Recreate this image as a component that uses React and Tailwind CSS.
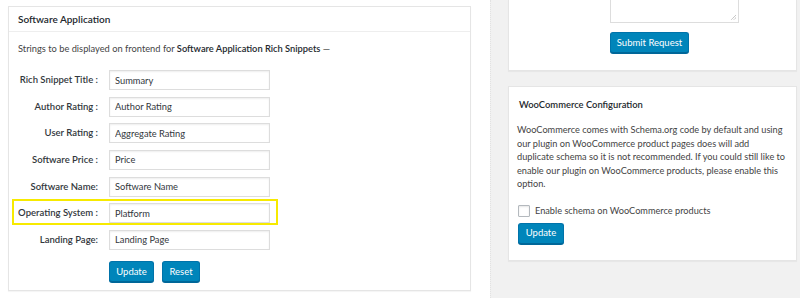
import React from 'react';

const FIELDS = [
  { label: 'Rich Snippet Title :', value: 'Summary' },
  { label: 'Author Rating :', value: 'Author Rating' },
  { label: 'User Rating :', value: 'Aggregate Rating' },
  { label: 'Software Price :', value: 'Price' },
  { label: 'Software Name:', value: 'Software Name' },
  { label: 'Operating System :', value: 'Platform', highlight: true },
  { label: 'Landing Page:', value: 'Landing Page' },
];

const btn = 'h-[21px] px-[5px] rounded-[3px] bg-[#0085ba] border border-[#0073aa] border-b-[#006799] shadow-[0_1px_0_#006799] text-white text-[9.5px] leading-none whitespace-nowrap flex items-center justify-center';

function FieldRow({ label, value, highlight }) {
  return (
    <div className="relative flex items-center h-[20px]">
      {highlight && (
        <span className="absolute left-[-6px] top-[-4px] w-[266px] h-[26px] border-2 border-[#f7ea00] pointer-events-none" />
      )}
      <label className="w-[81px] pr-[1px] text-right text-[9.5px] font-semibold text-[#32373c] whitespace-nowrap">{label}</label>
      <input
        type="text"
        defaultValue={value}
        className="ml-[10px] w-[161px] h-[20px] border border-[#dddddd] bg-white px-[5px] text-[9.3px] text-[#32373c] shadow-[inset_0_1px_2px_rgba(0,0,0,0.07)] outline-none"
      />
    </div>
  );
}

export default function App() {
  return (
    <div className="w-[800px] h-[298px] flex bg-white overflow-hidden" style={{ fontFamily: 'Lato, "Open Sans", sans-serif' }}>
      {/* left column */}
      <div className="w-[490px] shrink-0 pl-[8px] pt-[6px]">
        <div className="w-[463px] h-[285px] border border-[#e5e5e5] bg-white shadow-[0_1px_1px_rgba(0,0,0,0.04)]">
          <div className="h-[25px] border-b border-[#eeeeee] px-[9px] flex items-center">
            <h2 className="text-[10px] font-semibold text-[#23282d]">Software Application</h2>
          </div>
          <div className="px-[9px] pt-[10px]">
            <p className="text-[9.3px] text-[#444] h-[14px] leading-[14px] whitespace-nowrap">
              Strings to be displayed on frontend for <span className="font-semibold text-[#23282d]">Software Application Rich Snippets</span> —
            </p>
            <div className="mt-[14px] flex flex-col gap-[6.67px]">
              {FIELDS.map(f => <FieldRow key={f.label} {...f} />)}
            </div>
            <div className="mt-[11px] ml-[91px] flex gap-[8px]">
              <button className={btn + ' w-[45px]'}>Update</button>
              <button className={btn + ' w-[38px]'}>Reset</button>
            </div>
          </div>
        </div>
      </div>

      {/* right column */}
      <div className="flex-1 bg-[#f1f1f1] border-l border-dotted border-[#e2e2e2] pl-[17px] pr-[3px]">
        <div className="h-[71px] bg-white border border-t-0 border-[#e5e5e5] shadow-[0_1px_1px_rgba(0,0,0,0.04)] overflow-hidden">
          <div className="relative ml-[101px] mt-[-30px] w-[129px] h-[53px] border border-[#dddddd] bg-white">
            <svg className="absolute right-[1px] bottom-[1px]" width="7" height="7" viewBox="0 0 7 7">
              <path d="M6 1 L1 6 M6 3.5 L3.5 6" stroke="#9a9a9a" strokeWidth="0.8" strokeDasharray="1 0.6" />
            </svg>
          </div>
          <button className={btn + ' mt-[9px] ml-[101px] w-[79px]'}>Submit Request</button>
        </div>

        <div className="mt-[15px] h-[175px] bg-white border border-[#e5e5e5] shadow-[0_1px_1px_rgba(0,0,0,0.04)] px-[8px] pt-[11px]">
          <h3 className="pl-[2px] h-[14px] leading-[14px] text-[9.4px] font-semibold text-[#23282d]">WooCommerce Configuration</h3>
          <p className="mt-[11px] text-[9.2px] leading-[13.5px] text-[#444] whitespace-nowrap">
            WooCommerce comes with Schema.org code by default and using<br />
            our plugin on WooCommerce product pages does will add<br />
            duplicate schema so it is not recommended. If you could still like to<br />
            enable our plugin on WooCommerce products, please enable this<br />
            option.
          </p>
          <label className="mt-[14px] ml-[1px] flex items-center gap-[5px] h-[13px]">
            <span className="w-[12px] h-[12px] border border-[#b4b9be] rounded-[1px] bg-white shadow-[inset_0_1px_2px_rgba(0,0,0,0.1)]" />
            <span className="text-[9.2px] text-[#444]">Enable schema on WooCommerce products</span>
          </label>
          <button className={btn + ' mt-[5px] ml-[1px] w-[46px]'}>Update</button>
        </div>
      </div>
    </div>
  );
}
